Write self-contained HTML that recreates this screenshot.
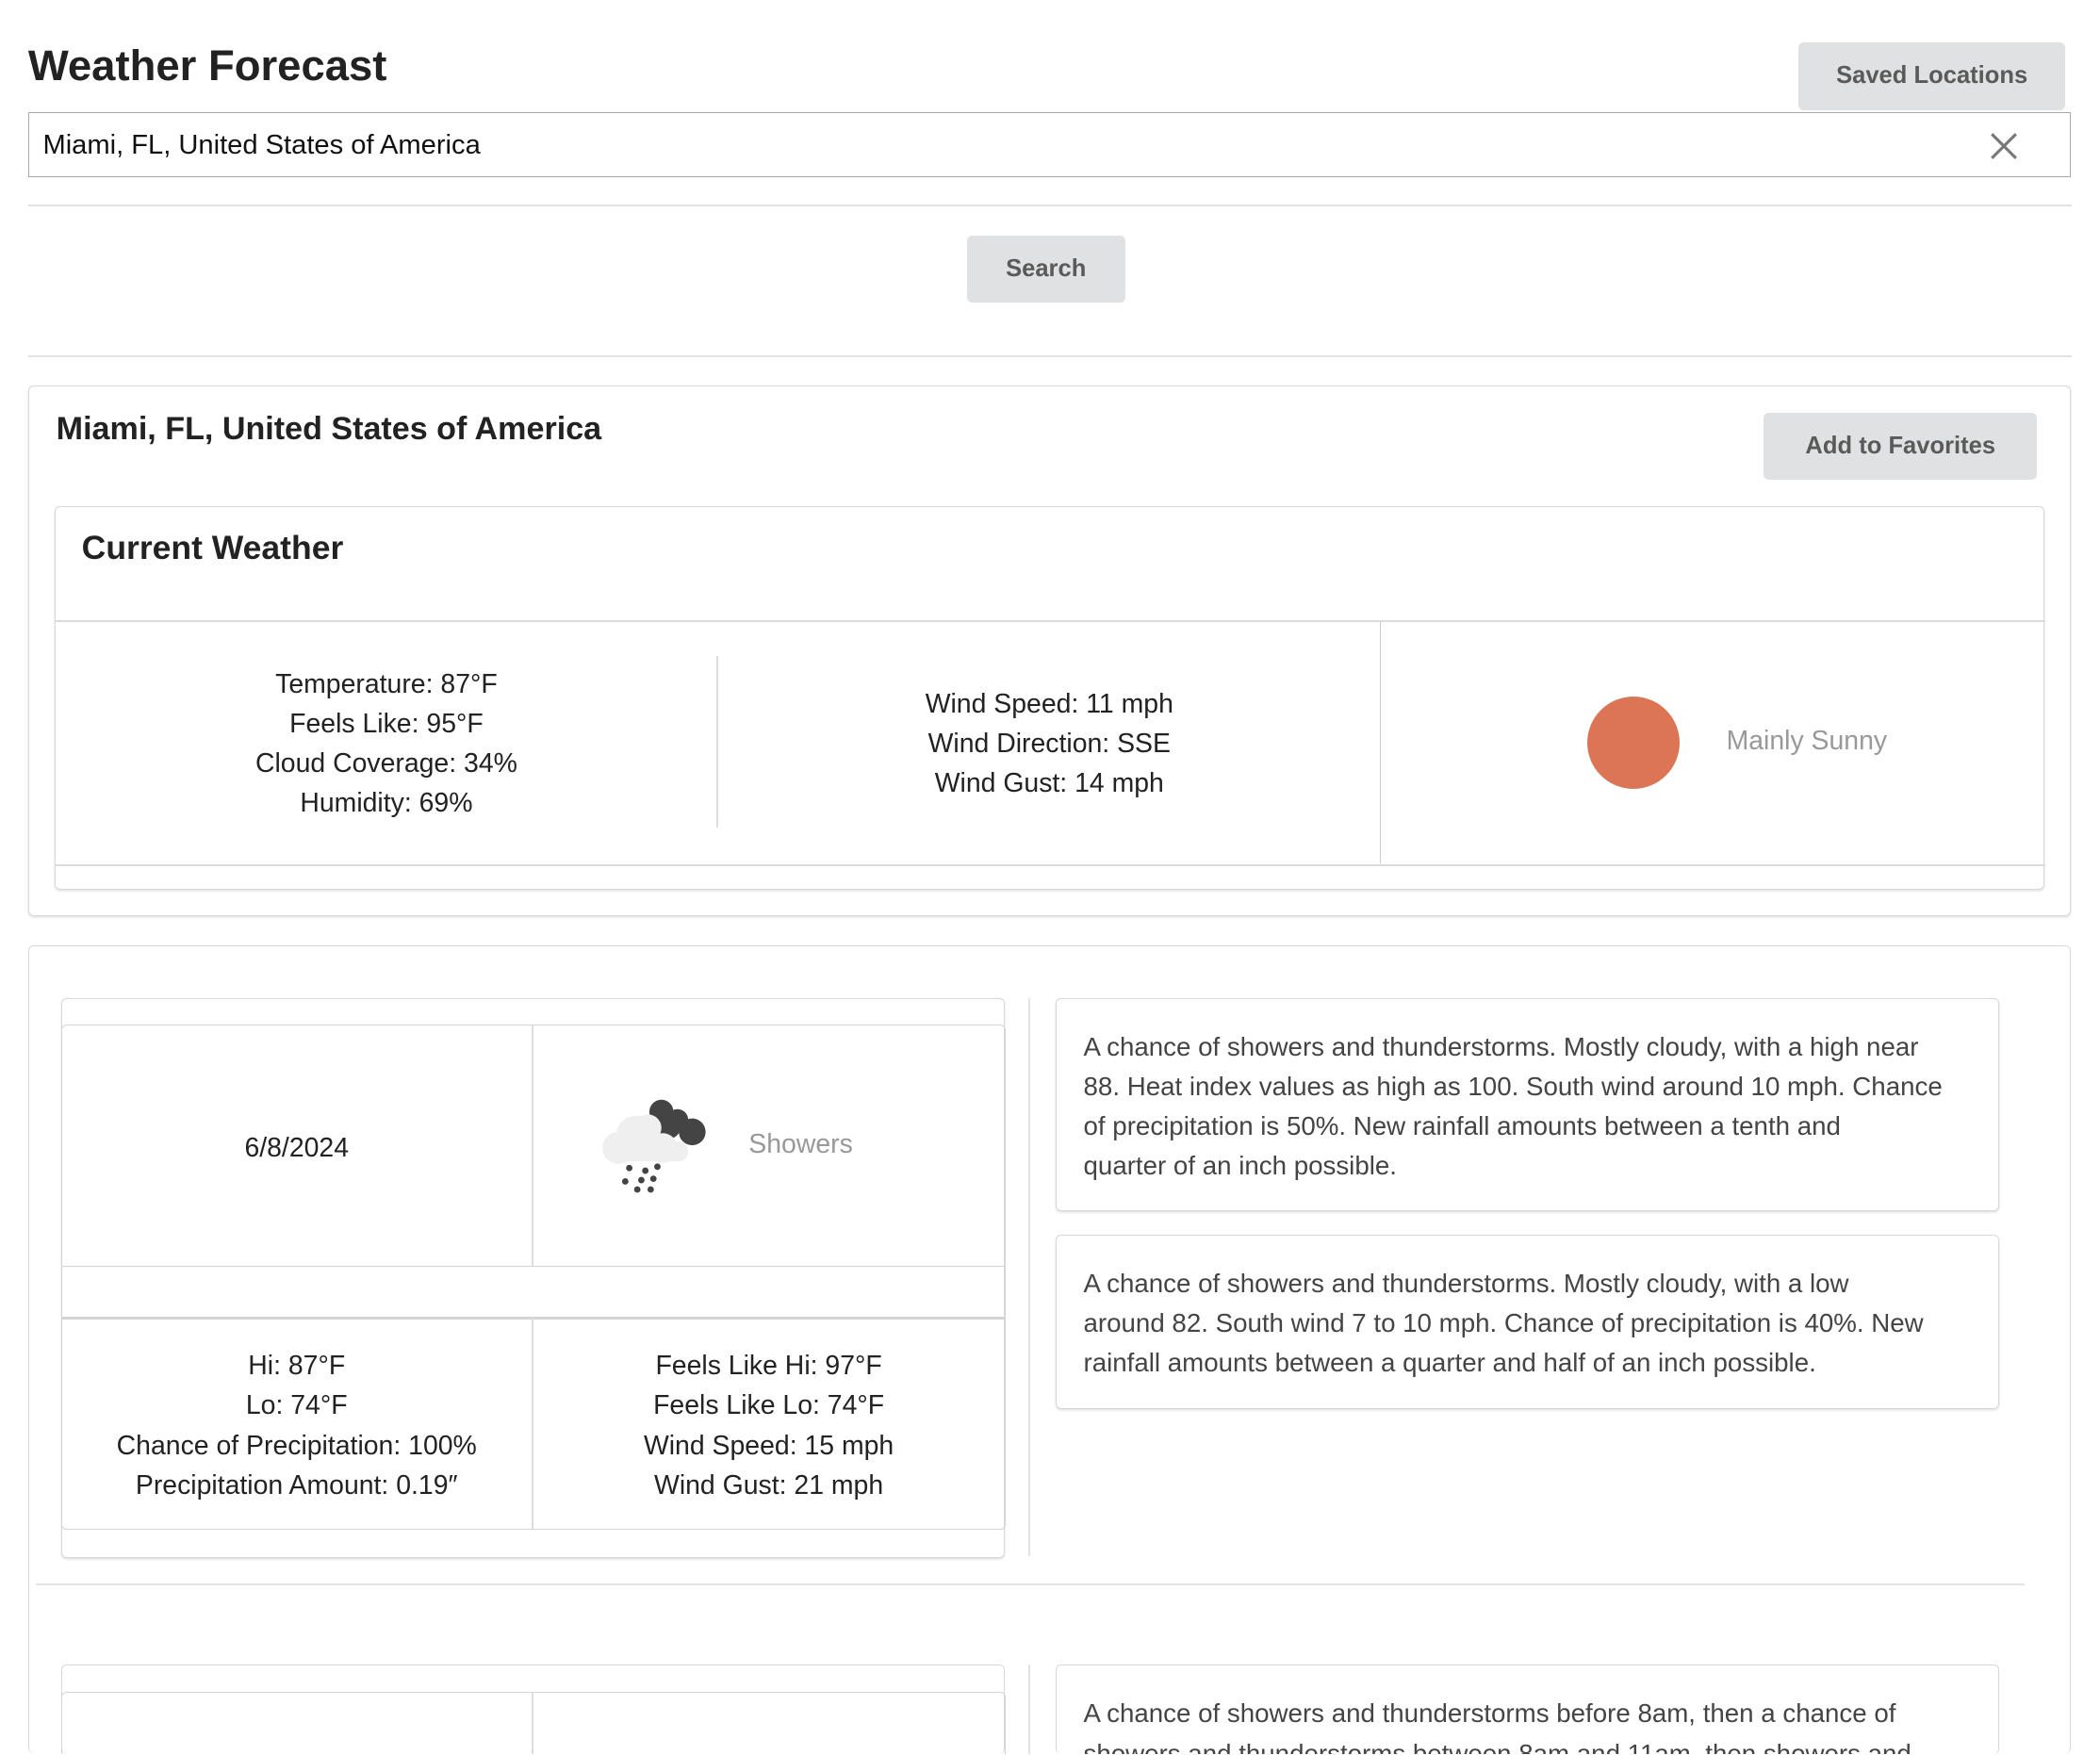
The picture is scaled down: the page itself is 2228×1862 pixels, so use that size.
<!DOCTYPE html>
<html style="overflow:hidden"><head><meta charset="utf-8"><style>
html,body{margin:0;padding:0;background:#fff;}
body{width:2228px;height:1862px;overflow:hidden;position:relative;}
#w{position:absolute;left:0;top:0;width:1568px;height:1310px;overflow:hidden;zoom:1.42092;font-family:"Liberation Sans",sans-serif;color:#222;}
.a{position:absolute;}
.btn{position:absolute;background:#e0e1e2;color:#5a5a5a;border-radius:4px;font-size:18px;font-weight:bold;display:flex;align-items:center;justify-content:center;}
.hr{position:absolute;height:0;border-top:2px solid #e3e3e3;}
.box{position:absolute;border:1px solid #d8d8d8;border-radius:4px;box-shadow:0 1px 2px rgba(0,0,0,.12);background:#fff;}
.cell{position:absolute;display:flex;flex-direction:column;align-items:center;justify-content:center;font-size:20px;line-height:29.6px;color:#222;text-align:center;}
.txt{position:absolute;font-size:19.5px;line-height:29.6px;color:#444;white-space:nowrap;}
</style></head><body><div id="w">
<div class="a" style="left:21px;top:31px;font-size:32px;font-weight:bold;color:#222">Weather Forecast</div>
<div class="btn" style="left:1343px;top:32px;width:199px;height:50px">Saved Locations</div>
<div class="a" style="left:21px;top:84px;width:1524px;height:47px;border:1px solid #a9a9a9;"></div>
<div class="a" style="left:32px;top:97px;font-size:20.5px;color:#111">Miami, FL, United States of America</div>
<svg class="a" style="left:1484px;top:97px" width="24" height="24" viewBox="0 0 24 24"><path d="M3 3L21 21M21 3L3 21" stroke="#777" stroke-width="2.2"/></svg>
<div class="hr" style="left:21px;top:153px;width:1526px"></div>
<div class="btn" style="left:722px;top:176px;width:118px;height:50px">Search</div>
<div class="hr" style="left:21px;top:265px;width:1526px"></div>

<div class="box" style="left:21px;top:288px;width:1524px;height:395px"></div>
<div class="a" style="left:42px;top:307px;font-size:24px;font-weight:bold;color:#222">Miami, FL, United States of America</div>
<div class="btn" style="left:1317px;top:308px;width:204px;height:50px">Add to Favorites</div>
<div class="box" style="left:41px;top:378px;width:1484px;height:285px"></div>
<div class="a" style="left:61px;top:395px;font-size:25px;font-weight:bold;color:#222">Current Weather</div>
<div class="a" style="left:41px;top:463px;width:1486px;height:181px;border-top:2px solid #dcdcdc;border-bottom:2px solid #dcdcdc;"></div>
<div class="a" style="left:535px;top:490px;width:1px;height:128px;background:#ddd"></div>
<div class="a" style="left:1030px;top:464px;width:1px;height:181px;background:#ccc"></div>
<div class="cell" style="left:41px;top:466px;width:495px;height:179px"><div>Temperature: 87°F</div><div>Feels Like: 95°F</div><div>Cloud Coverage: 34%</div><div>Humidity: 69%</div></div>
<div class="cell" style="left:536px;top:466px;width:495px;height:179px"><div>Wind Speed: 11 mph</div><div>Wind Direction: SSE</div><div>Wind Gust: 14 mph</div></div>
<div class="a" style="left:1185px;top:520px;width:69px;height:69px;border-radius:50%;background:#dc7555"></div>
<div class="a" style="left:1289px;top:542px;font-size:20px;color:#999">Mainly Sunny</div>

<div class="box" style="left:21px;top:706px;width:1524px;height:602px;border-bottom:none;box-shadow:none"></div>
<div class="box" style="left:46px;top:745px;width:703px;height:417px"></div>
<div class="a" style="left:46px;top:765px;height:377px;border:1px solid #d4d4d4;border-radius:4px;box-sizing:border-box;width:705px"></div>
<div class="a" style="left:46px;top:945px;width:705px;height:1px;background:#d4d4d4"></div>
<div class="a" style="left:46px;top:983px;width:705px;height:2px;background:#d4d4d4"></div>
<div class="a" style="left:397px;top:765px;width:1px;height:180px;background:#ddd"></div>
<div class="a" style="left:397px;top:984px;width:1px;height:158px;background:#ddd"></div>
<div class="cell" style="left:46px;top:768px;width:351px;height:179px"><div>6/8/2024</div></div>
<svg class="a" style="left:440px;top:812px" width="100" height="85" viewBox="440 812 100 85">
<g fill="#444"><circle cx="494" cy="830" r="9"/><circle cx="506" cy="836" r="8"/><circle cx="517" cy="845" r="10"/><circle cx="500" cy="842" r="8"/></g>
<g fill="#efefef"><circle cx="475" cy="848" r="15"/><circle cx="462" cy="857" r="12"/><circle cx="495" cy="857" r="11"/><circle cx="484" cy="842" r="10"/><rect x="452" y="852" width="62" height="15" rx="7"/></g>
<g fill="#444"><circle cx="470" cy="872" r="2.4"/><circle cx="482" cy="874" r="2.4"/><circle cx="491" cy="871" r="2.4"/><circle cx="467" cy="882" r="2.4"/><circle cx="479" cy="881" r="2.4"/><circle cx="488" cy="880" r="2.4"/><circle cx="476" cy="888" r="2.4"/><circle cx="486" cy="888" r="2.4"/></g>
</svg>
<div class="a" style="left:559px;top:843px;font-size:20px;color:#999">Showers</div>
<div class="cell" style="left:46px;top:986px;width:351px;height:157px"><div>Hi: 87°F</div><div>Lo: 74°F</div><div>Chance of Precipitation: 100%</div><div>Precipitation Amount: 0.19″</div></div>
<div class="cell" style="left:398px;top:986px;width:352px;height:157px"><div>Feels Like Hi: 97°F</div><div>Feels Like Lo: 74°F</div><div>Wind Speed: 15 mph</div><div>Wind Gust: 21 mph</div></div>
<div class="a" style="left:768px;top:745px;width:1px;height:417px;background:#e3e3e3"></div>
<div class="box" style="left:788px;top:745px;width:703px;height:158px"></div>
<div class="txt" style="left:809px;top:767px">A chance of showers and thunderstorms. Mostly cloudy, with a high near<br>88. Heat index values as high as 100. South wind around 10 mph. Chance<br>of precipitation is 50%. New rainfall amounts between a tenth and<br>quarter of an inch possible.</div>
<div class="box" style="left:788px;top:922px;width:703px;height:129px"></div>
<div class="txt" style="left:809px;top:944px">A chance of showers and thunderstorms. Mostly cloudy, with a low<br>around 82. South wind 7 to 10 mph. Chance of precipitation is 40%. New<br>rainfall amounts between a quarter and half of an inch possible.</div>
<div class="hr" style="left:27px;top:1182px;width:1485px"></div>
<div class="box" style="left:46px;top:1243px;width:703px;height:66px;border-bottom:none;box-shadow:none"></div>
<div class="a" style="left:46px;top:1263px;width:705px;height:47px;border:1px solid #d4d4d4;border-bottom:none;border-radius:4px 4px 0 0;box-sizing:border-box"></div>
<div class="a" style="left:397px;top:1263px;width:1px;height:47px;background:#ddd"></div>
<div class="a" style="left:768px;top:1243px;width:1px;height:67px;background:#e3e3e3"></div>
<div class="box" style="left:788px;top:1243px;width:703px;height:66px;border-bottom:none;box-shadow:none"></div>
<div class="a" style="left:0;top:1265px;width:1568px;height:45px;overflow:hidden"><div class="txt" style="left:809px;top:0">A chance of showers and thunderstorms before 8am, then a chance of<br>showers and thunderstorms between 8am and 11am, then showers and</div></div>
</div></body></html>
